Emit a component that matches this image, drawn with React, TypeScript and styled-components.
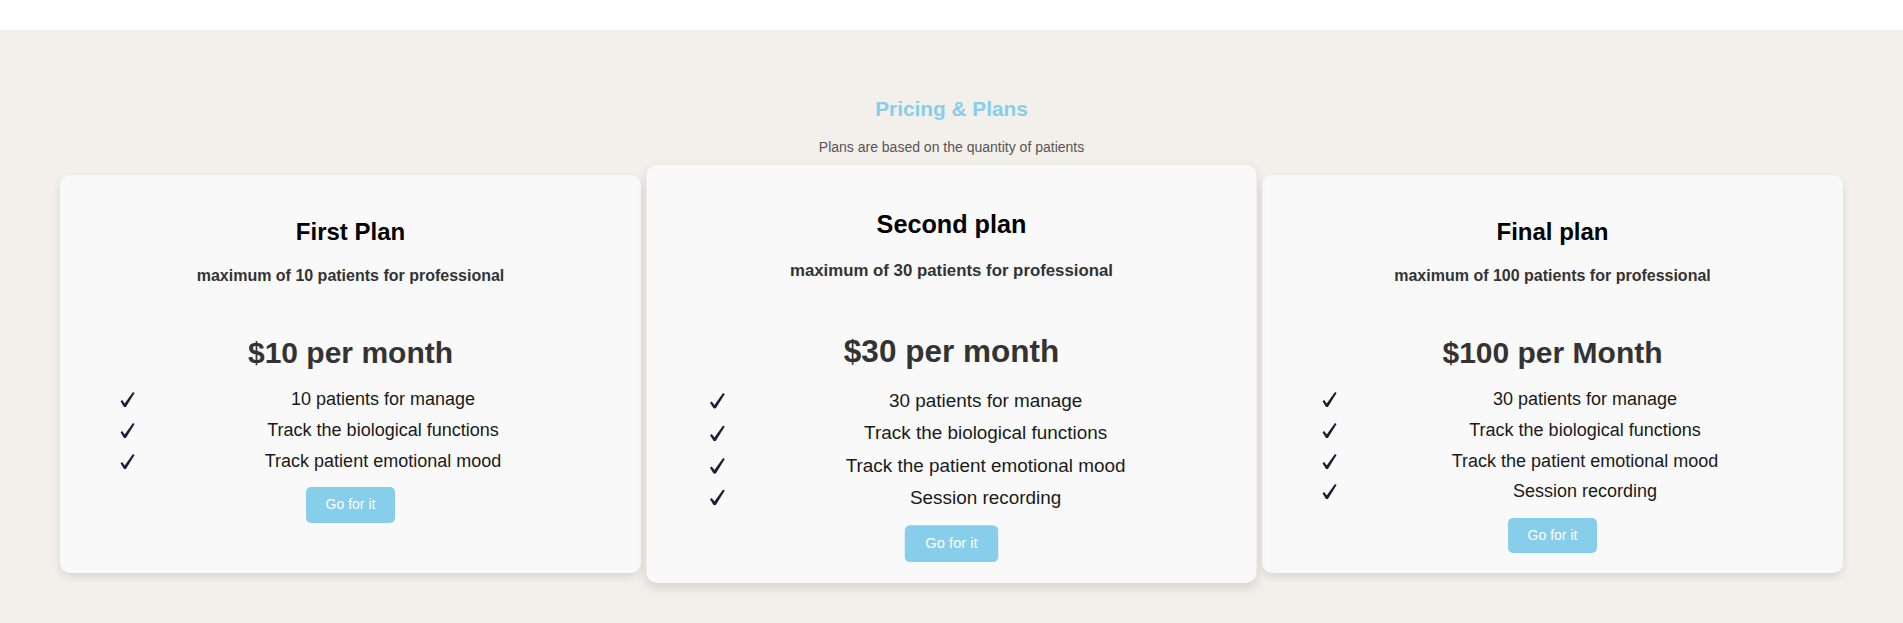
import React from "react";
import styled, { createGlobalStyle } from "styled-components";

const GlobalStyle = createGlobalStyle`
  html, body {
    margin: 0;
    padding: 0;
  }
  body {
    font-family: "Liberation Sans", Arial, sans-serif;
    background: #ffffff;
  }
  * { box-sizing: border-box; }
`;

const TopBar = styled.header`
  height: 30px;
  background: #ffffff;
`;

const Section = styled.section`
  background: #f3f0eb;
  min-height: calc(100vh - 30px);
  padding: 66.8px 60px 0;
  display: flex;
  flex-direction: column;
  align-items: center;
`;

const Heading = styled.h2`
  margin: 0;
  font-size: 20.8px;
  line-height: 24px;
  font-weight: 700;
  color: #87ceeb;
  text-align: center;
`;

const Lead = styled.p`
  margin: 18.65px 0 0;
  font-size: 14px;
  line-height: 16px;
  color: #555555;
  text-align: center;
`;

const CardRow = styled.div`
  margin-top: 19.55px;
  align-self: stretch;
  display: flex;
  gap: 20px;
  align-items: stretch;
`;

const Card = styled.article<{ $featured?: boolean }>`
  flex: 1 1 0;
  min-width: 0;
  background: #f9f9f9;
  border-radius: 10px;
  padding: 20px;
  box-shadow: ${(p) =>
    p.$featured ? "0 4px 10px rgba(0, 0, 0, 0.12)" : "0 4px 8px rgba(0, 0, 0, 0.1)"};
  display: flex;
  flex-direction: column;
  align-items: center;
  text-align: center;
  transform: ${(p) => (p.$featured ? "scale(1.05)" : "none")};
`;

const PlanTitle = styled.h3`
  margin: 23.4px 0 0;
  font-size: 24px;
  line-height: 28px;
  font-weight: 700;
  color: #000000;
`;

const PlanLimit = styled.p`
  margin: 20.75px 0 0;
  font-size: 16px;
  line-height: 18px;
  font-weight: 700;
  color: #333333;
`;

const Price = styled.p`
  margin: 50.75px 0 0;
  font-size: 30px;
  line-height: 34px;
  font-weight: 700;
  color: #333333;
`;

const FeatureList = styled.ul`
  list-style: none;
  margin: 19.5px 0 0;
  padding: 0 0 0 40px;
  align-self: stretch;
  display: flex;
  flex-direction: column;
  gap: 10px;
`;

const FeatureItem = styled.li`
  display: flex;
  align-items: center;
  font-size: 18px;
  line-height: 20.7px;
  color: #1a1a1a;
`;

const CheckBox = styled.span`
  flex: none;
  width: 25px;
  display: flex;
  align-items: center;
`;

const FeatureText = styled.span`
  flex: 1 1 auto;
  text-align: center;
`;

const GoButton = styled.button`
  margin-top: 15.8px;
  padding: 10px 20px;
  font-family: "Liberation Sans", Arial, sans-serif;
  font-size: 14px;
  line-height: 15.4px;
  color: #ffffff;
  background: #87ceeb;
  border: none;
  border-radius: 5px;
  cursor: pointer;
`;

const Check = () => (
  <svg width="15" height="15" viewBox="0 0 15 15" aria-hidden="true">
    <path
      d="M0.5 9.3 L2.2 8.1 L4.7 11.5 L13 0.1 L14.6 1 L5.9 14.9 L4 14.9 Z"
      fill="#1c1c3a"
    />
  </svg>
);

type Plan = {
  title: string;
  limit: string;
  price: string;
  features: string[];
  featured?: boolean;
};

const plans: Plan[] = [
  {
    title: "First Plan",
    limit: "maximum of 10 patients for professional",
    price: "$10 per month",
    features: [
      "10 patients for manage",
      "Track the biological functions",
      "Track patient emotional mood",
    ],
  },
  {
    title: "Second plan",
    limit: "maximum of 30 patients for professional",
    price: "$30 per month",
    features: [
      "30 patients for manage",
      "Track the biological functions",
      "Track the patient emotional mood",
      "Session recording",
    ],
    featured: true,
  },
  {
    title: "Final plan",
    limit: "maximum of 100 patients for professional",
    price: "$100 per Month",
    features: [
      "30 patients for manage",
      "Track the biological functions",
      "Track the patient emotional mood",
      "Session recording",
    ],
  },
];

export default function App() {
  return (
    <>
      <GlobalStyle />
      <TopBar />
      <Section>
        <Heading>Pricing &amp; Plans</Heading>
        <Lead>Plans are based on the quantity of patients</Lead>
        <CardRow>
          {plans.map((plan) => (
            <Card key={plan.title} $featured={plan.featured}>
              <PlanTitle>{plan.title}</PlanTitle>
              <PlanLimit>{plan.limit}</PlanLimit>
              <Price>{plan.price}</Price>
              <FeatureList>
                {plan.features.map((f) => (
                  <FeatureItem key={f}>
                    <CheckBox>
                      <Check />
                    </CheckBox>
                    <FeatureText>{f}</FeatureText>
                  </FeatureItem>
                ))}
              </FeatureList>
              <GoButton type="button">Go for it</GoButton>
            </Card>
          ))}
        </CardRow>
      </Section>
    </>
  );
}
